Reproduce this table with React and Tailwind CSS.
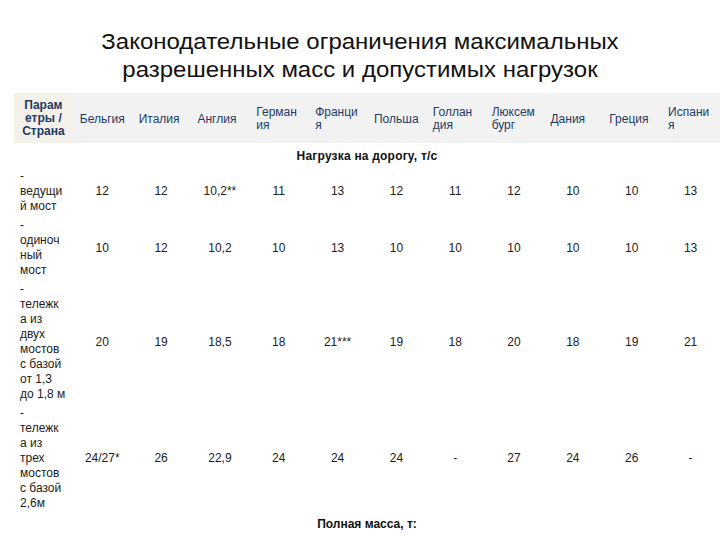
import React from 'react';

const countries = [
  ['Бельгия'],
  ['Италия'],
  ['Англия'],
  ['Герман', 'ия'],
  ['Франци', 'я'],
  ['Польша'],
  ['Голлан', 'дия'],
  ['Люксем', 'бург'],
  ['Дания'],
  ['Греция'],
  ['Испани', 'я'],
];

const rows = [
  {
    label: ['-', 'ведущи', 'й мост'],
    values: ['12', '12', '10,2**', '11', '13', '12', '11', '12', '10', '10', '13'],
  },
  {
    label: ['-', 'одиноч', 'ный', 'мост'],
    values: ['10', '12', '10,2', '10', '13', '10', '10', '10', '10', '10', '13'],
  },
  {
    label: ['-', 'тележк', 'а из', 'двух', 'мостов', 'с базой', 'от 1,3', 'до 1,8 м'],
    values: ['20', '19', '18,5', '18', '21***', '19', '18', '20', '18', '19', '21'],
  },
  {
    label: ['-', 'тележк', 'а из', 'трех', 'мостов', 'с базой', '2,6м'],
    values: ['24/27*', '26', '22,9', '24', '24', '24', '-', '27', '24', '26', '-'],
  },
];

const Lines = ({ parts }) =>
  parts.map((p, i) => (
    <React.Fragment key={i}>
      {i > 0 && <br />}
      {p}
    </React.Fragment>
  ));

export default function App() {
  return (
    <div className="w-[720px] h-[540px] overflow-hidden bg-white font-['Liberation_Sans',Arial,sans-serif]">
      {/* Title */}
      <h1 className="pt-[28px] text-center text-[22px] leading-[28px] text-[#111] scale-x-[1.09]">
        Законодательные ограничения максимальных
        <br />
        разрешенных масс и допустимых нагрузок
      </h1>

      <table className="ml-[14px] mt-[9px] w-[706px] table-fixed border-collapse">
        <colgroup>
          {Array.from({ length: 12 }).map((_, i) => (
            <col key={i} className="w-[58.83px]" />
          ))}
        </colgroup>
        <thead>
          <tr className="h-[50px] text-[12px] leading-[13px] text-[#1f3a63]">
            <th className="bg-[#f3f1ea] text-center font-bold align-middle">
              Парам
              <br />
              етры /
              <br />
              Страна
            </th>
            {countries.map((c, i) => (
              <th key={i} className="bg-[#f2f2f2] pl-[7px] pt-[2px] text-left font-normal whitespace-nowrap align-middle">
                <Lines parts={c} />
              </th>
            ))}
          </tr>
        </thead>
        <tbody className="text-[12px] leading-[15px] text-[#222]">
          <tr className="h-[24px]">
            <td colSpan={12} className="pt-[2px] text-center font-bold tracking-[0.2px] text-[#111] align-middle">
              Нагрузка на дорогу, т/с
            </td>
          </tr>
          {rows.map((r, i) => (
            <tr key={i}>
              <td className="py-[2px] pl-[6px] whitespace-nowrap align-middle">
                <Lines parts={r.label} />
              </td>
              {r.values.map((v, j) => (
                <td key={j} className="text-center align-middle whitespace-nowrap">
                  {v}
                </td>
              ))}
            </tr>
          ))}
          <tr className="h-[22px]">
            <td colSpan={12} className="text-center font-bold text-[#111] align-middle">
              Полная масса, т:
            </td>
          </tr>
        </tbody>
      </table>
    </div>
  );
}
